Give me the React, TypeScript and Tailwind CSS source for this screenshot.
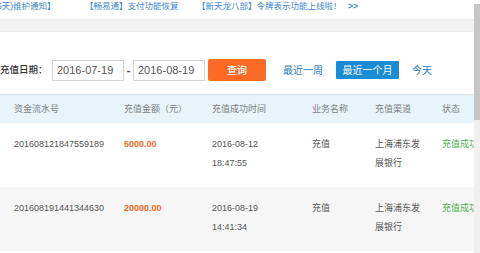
import React from 'react';

const FONT = { fontFamily: '"Liberation Sans", "Noto Sans CJK SC", sans-serif' };

interface Record {
  id: string;
  amount: string;
  date: string;
  time: string;
}

const records: Record[] = [
  { id: '201608121847559189', amount: '5000.00', date: '2016-08-12', time: '18:47:55' },
  { id: '201608191441344630', amount: '20000.00', date: '2016-08-19', time: '14:41:34' },
];

const cols = ['w-[124px] pl-[14px]', 'w-[88px]', 'w-[100px]', 'w-[63px]', 'w-[67px]', 'flex-1'];

export default function App() {
  return (
    <div className="relative w-[480px] h-[253px] overflow-hidden bg-white" style={FONT}>
      {/* Scrollbar */}
      <div className="absolute right-0 top-[4px] bottom-0 w-[6px] bg-[#f0f0f0]">
        <div className="h-[116px] bg-[#c6c6c6]" />
      </div>

      <div className="w-[474px]">
        {/* Notices */}
        <div className="flex items-center h-[13px] text-[8.5px] text-[#3f86cf] whitespace-nowrap">
          <span className="-ml-[3px] w-[86px] shrink-0">5天)维护通知】</span>
          <span className="w-[114px] pl-[2px] shrink-0">【畅易通】支付功能恢复</span>
          <span className="w-[151px] shrink-0">【新天龙八部】令牌表示功能上线啦！</span>
          <span className="font-bold">&gt;&gt;</span>
        </div>
        <div className="mt-[6px] h-[13px] bg-[#f2f2f2] border-y border-[#ebebeb]" />

        {/* Filter */}
        <div className="flex items-center mt-[27px] h-[22px]">
          <span className="text-[9.5px] text-[#333] font-medium w-[52px]">充值日期：</span>
          <div className="w-[72px] h-[21px] border border-[#d4d4d4] flex items-center pl-[4px] text-[11px] text-[#555]">2016-07-19</div>
          <span className="w-[9px] text-center text-[11px] font-bold text-[#444]">-</span>
          <div className="w-[72px] h-[21px] border border-[#d4d4d4] flex items-center pl-[4px] text-[11px] text-[#555]">2016-08-19</div>
          <button className="ml-[3px] w-[58px] h-[22px] rounded-[2px] bg-[#fc6a26] text-white text-[10px] font-medium">查询</button>
          <span className="ml-[17px] text-[10px] text-[#2a7cc4]">最近一周</span>
          <span className="ml-[13px] w-[63px] h-[18px] rounded-[1px] bg-[#1a8bd5] text-white text-[10px] flex items-center justify-center">最近一个月</span>
          <span className="ml-[13px] text-[10px] text-[#2a7cc4]">今天</span>
        </div>

        {/* Table header */}
        <div className="mt-[13px] flex items-center h-[29px] pt-[2px] bg-[#e7f4fa] border-t border-[#e2e2e2] text-[9px] text-[#808080]">
          <div className={cols[0]}>资金流水号</div>
          <div className={cols[1]}>充值金额（元）</div>
          <div className={cols[2]}>充值成功时间</div>
          <div className={cols[3]}>业务名称</div>
          <div className={cols[4]}>充值渠道</div>
          <div className={cols[5]}>状态</div>
        </div>

        {/* Rows */}
        {records.map((r, i) => (
          <div
            key={r.id}
            className={`flex h-[64px] pt-[12px] text-[9px] leading-[19px] text-[#555] whitespace-nowrap ${i % 2 === 1 ? 'bg-[#f6f6f6]' : 'bg-white'}`}
          >
            <div className={cols[0]}>{r.id}</div>
            <div className={`${cols[1]} font-bold text-[#f36b24]`}>{r.amount}</div>
            <div className={cols[2]}>
              <div>{r.date}</div>
              <div>{r.time}</div>
            </div>
            <div className={cols[3]}>充值</div>
            <div className={cols[4]}>
              <div>上海浦东发</div>
              <div>展银行</div>
            </div>
            <div className={`${cols[5]} text-[#4caf50] overflow-hidden`}>充值成功</div>
          </div>
        ))}
      </div>
    </div>
  );
}
